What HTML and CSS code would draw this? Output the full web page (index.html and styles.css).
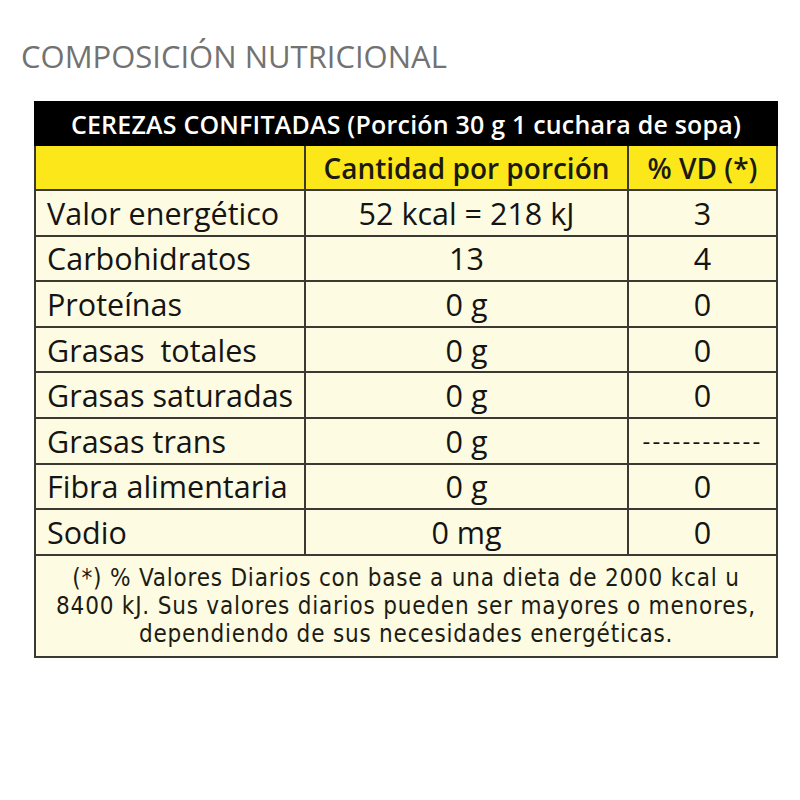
FILE: index.html
```html
<!DOCTYPE html>
<html lang="es">
<head>
<meta charset="utf-8">
<link rel="stylesheet" href="styles.css">
</head>
<body>
<div class="page">
  <h1 class="title">COMPOSICIÓN NUTRICIONAL</h1>
  <table class="nutri">
    <colgroup>
      <col class="c1"><col class="c2"><col class="c3">
    </colgroup>
    <thead>
      <tr class="head-black"><th colspan="3">CEREZAS CONFITADAS (Porción 30 g 1 cuchara de sopa)</th></tr>
      <tr class="head-yellow"><th></th><th>Cantidad por porción</th><th>% VD (*)</th></tr>
    </thead>
    <tbody>
      <tr><td class="lbl">Valor energético</td><td>52 kcal = 218 kJ</td><td>3</td></tr>
      <tr><td class="lbl">Carbohidratos</td><td>13</td><td>4</td></tr>
      <tr><td class="lbl">Proteínas</td><td>0 g</td><td>0</td></tr>
      <tr><td class="lbl">Grasas&nbsp; totales</td><td>0 g</td><td>0</td></tr>
      <tr><td class="lbl">Grasas saturadas</td><td>0 g</td><td>0</td></tr>
      <tr><td class="lbl">Grasas trans</td><td>0 g</td><td class="dash">------------</td></tr>
      <tr><td class="lbl">Fibra alimentaria</td><td>0 g</td><td>0</td></tr>
      <tr><td class="lbl">Sodio</td><td>0 mg</td><td>0</td></tr>
      <tr class="foot"><td colspan="3"><p class="fl">(*) % Valores Diarios con base a una dieta de 2000 kcal u</p><p class="fl">8400 kJ. Sus valores diarios pueden ser mayores o menores,</p><p class="fl">dependiendo de sus necesidades energéticas.</p></td></tr>
    </tbody>
  </table>
</div>
</body>
</html>
```
FILE: styles.css
```css
html, body {
  margin: 0;
  padding: 0;
  background: #ffffff;
}
.page {
  width: 800px;
  height: 800px;
  padding: 36px 0 0 21px;
  box-sizing: border-box;
  font-family: "Open Sans", "DejaVu Sans", sans-serif;
}
.title {
  margin: 0;
  font-size: 31px;
  line-height: 40px;
  font-weight: 400;
  color: #727272;
  letter-spacing: 0;
}
.nutri {
  margin: 25px 0 0 13px;
  width: 742px;
  border-collapse: collapse;
  table-layout: fixed;
  color: #141414;
}
.c1 { width: 270px; }
.c2 { width: 323px; }
.c3 { width: 149px; }
.nutri th, .nutri td {
  border: 2px solid #3a3a32;
  padding: 0;
  text-align: center;
  white-space: nowrap;
}
.head-black th {
  background: #000000;
  color: #ffffff;
  font-size: 25px;
  font-weight: 600;
  height: 41px;
  letter-spacing: 0.2px;
  border-color: #000000;
}
.head-yellow th {
  background: #fce81a;
  font-size: 28px;
  font-weight: 600;
  height: 43px;
  color: #1a1a10;
}
.nutri tbody td {
  background: #fdfbe2;
  font-size: 30.5px;
  height: 43.6px;
  line-height: 34px;
}
.nutri tbody td.lbl {
  text-align: left;
  padding-left: 11px;
}
.nutri tbody td.dash {
  font-size: 24px;
  letter-spacing: 2.3px;
}
.nutri tbody .foot td {
  height: 100px;
  color: #1c1c14;
}
.fl {
  margin: 0;
  font-family: "DejaVu Sans Condensed", "DejaVu Sans", sans-serif;
  font-size: 24px;
  line-height: 28px;
  height: 28px;
  letter-spacing: 0.8px;
}
```
